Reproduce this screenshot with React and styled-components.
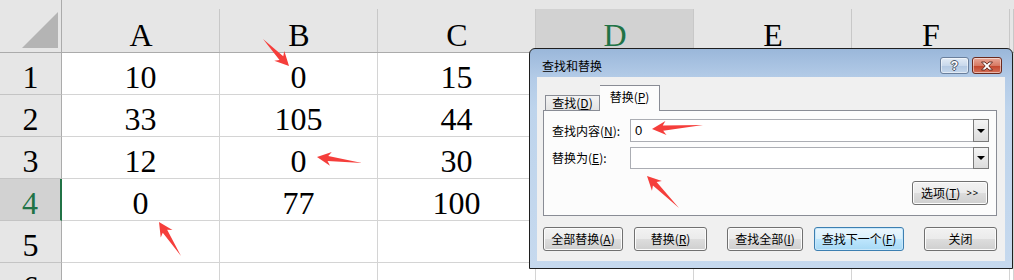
import styled, { createGlobalStyle } from "styled-components";

const GlobalStyle = createGlobalStyle`
  html, body { margin: 0; padding: 0; background: #fff; overflow: hidden; }
  * { box-sizing: border-box; }
`;

const cols = ["A", "B", "C", "D", "E", "F"];
const rows = [
  ["10", "0", "15"],
  ["33", "105", "44"],
  ["12", "0", "30"],
  ["0", "77", "100"],
  [],
  [],
];
const activeCol = 3;
const activeRow = 3;

const arrows = [
  { from: [263, 39], to: [289, 66] },
  { from: [362, 163], to: [317, 157] },
  { from: [181, 256], to: [159, 222] },
  { from: [703, 125], to: [652, 129] },
  { from: [679, 208], to: [647, 176] },
];

export default function App() {
  return (
    <Stage>
      <GlobalStyle />
      <Sheet>
        <Corner>
          <svg width="37" height="37" viewBox="0 0 37 37">
            <polygon points="36,0 36,36 0,36" fill="#b4b4b4" />
          </svg>
        </Corner>
        {cols.map((c, i) => (
          <ColHead key={c} $active={i === activeCol}>{c}</ColHead>
        ))}
        <ColHead />
        {rows.map((r, ri) => (
          <Row key={ri} r={r} ri={ri} />
        ))}
      </Sheet>

      <Dialog>
        <TitleBar>
          <Title>查找和替换</Title>
          <TitleButtons>
            <HelpButton>?</HelpButton>
            <CloseButton>
              <svg width="14" height="10" viewBox="0 0 14 10">
                <path
                  d="M1.5 1 H5 L7 3.2 L9 1 H12.5 L8.8 5 L12.5 9 H9 L7 6.8 L5 9 H1.5 L5.2 5 Z"
                  fill="#fff"
                  stroke="#5a2318"
                  strokeWidth="0.9"
                  strokeLinejoin="round"
                />
              </svg>
            </CloseButton>
          </TitleButtons>
        </TitleBar>

        <Body>
          <Tabs>
            <Tab>查找(<u>D</u>)</Tab>
            <Tab $active>替换(<u>P</u>)</Tab>
          </Tabs>
          <Panel>
            <Form>
              <Label>查找内容(<u>N</u>):</Label>
              <Combo>
                <ComboText>0</ComboText>
                <DropButton><Caret /></DropButton>
              </Combo>
              <Label>替换为(<u>E</u>):</Label>
              <Combo>
                <ComboText />
                <DropButton><Caret /></DropButton>
              </Combo>
            </Form>
            <OptionsRow>
              <Button $w={76}>选项(<u>T</u>) <Small>&gt;&gt;</Small></Button>
            </OptionsRow>
          </Panel>
          <Buttons>
            <Button $w={80}>全部替换(<u>A</u>)</Button>
            <Button $w={73} $gap={11}>替换(<u>R</u>)</Button>
            <Button $w={76} $gap={20}>查找全部(<u>I</u>)</Button>
            <Button $w={90} $gap={11} $focus>查找下一个(<u>F</u>)</Button>
            <Button $w={73} $gap={20}>关闭</Button>
          </Buttons>
        </Body>
      </Dialog>

      <Overlay width="1014" height="280" viewBox="0 0 1014 280">
        {arrows.map((a, i) => {
          const dx = a.to[0] - a.from[0];
          const dy = a.to[1] - a.from[1];
          const L = Math.hypot(dx, dy);
          const ang = (Math.atan2(dy, dx) * 180) / Math.PI;
          const pts = [
            [0, 0],
            [L - 11, -2.6],
            [L - 14, -7],
            [L, 0],
            [L - 14, 7],
            [L - 11, 2.6],
          ]
            .map((p) => p.join(","))
            .join(" ");
          return (
            <polygon
              key={i}
              points={pts}
              fill="#f53e3b"
              transform={`translate(${a.from[0]} ${a.from[1]}) rotate(${ang})`}
            />
          );
        })}
      </Overlay>
    </Stage>
  );
}

function Row({ r, ri }) {
  const active = ri === activeRow;
  return (
    <>
      <RowHead $active={active}>{ri + 1}</RowHead>
      {cols.map((c, ci) => (
        <Cell key={c}>{r[ci] || ""}</Cell>
      ))}
      <Cell />
    </>
  );
}

const Stage = styled.div`
  position: relative;
  width: 1014px;
  height: 280px;
  overflow: hidden;
  background: #fff;
`;

const Sheet = styled.div`
  display: grid;
  grid-template-columns: 62px repeat(6, 158px) 1fr;
  grid-template-rows: 53px repeat(6, 42px);
  font-family: "Liberation Serif", "Times New Roman", serif;
  font-size: 32px;
  color: #000;
`;

const Corner = styled.div`
  background: #e6e6e6;
  border-right: 1px solid #ababab;
  border-bottom: 1px solid #ababab;
  display: flex;
  align-items: flex-end;
  justify-content: flex-end;
  padding: 0 2px 3px 0;
`;

const ColHead = styled.div`
  display: flex;
  align-items: center;
  justify-content: center;
  padding-top: 17px;
  line-height: 1;
  background: linear-gradient(#c8c8c8, #c8c8c8) right 9px / 1px calc(100% - 9px) no-repeat,
    ${(p) => (p.$active ? "linear-gradient(#d2d2d2, #d2d2d2) 0 9px / 100% 100% no-repeat," : "")}
    #e6e6e6;
  color: ${(p) => (p.$active ? "#217346" : "#000")};
  border-bottom: 1px solid #ababab;
`;

const RowHead = styled.div`
  display: flex;
  align-items: center;
  justify-content: center;
  padding-top: 6px;
  line-height: 1;
  background: ${(p) => (p.$active ? "#d2d2d2" : "#e6e6e6")};
  color: ${(p) => (p.$active ? "#217346" : "#000")};
  border-bottom: 1px solid #c4c4c4;
  border-right: ${(p) => (p.$active ? "2px solid #217346" : "1px solid #ababab")};
`;

const Cell = styled.div`
  display: flex;
  align-items: center;
  justify-content: center;
  padding-top: 6px;
  line-height: 1;
  border-right: 1px solid #d4d4d4;
  border-bottom: 1px solid #d4d4d4;
`;

const Dialog = styled.div`
  position: absolute;
  left: 529px;
  top: 48px;
  width: 484px;
  height: 221px;
  border: 1px solid #1f1f1f;
  border-radius: 6px 6px 0 0;
  padding: 0 7px 7px 7px;
  display: flex;
  flex-direction: column;
  background: linear-gradient(180deg, #9ab7da 0px, #b3cbe7 28px, #bed4ec 60px, #c6d9ee 100%);
  font-family: "Noto Sans CJK SC", "Noto Sans", sans-serif;
  font-size: 12px;
  color: #000;
  u { text-decoration: underline; text-underline-offset: 1px; }
`;

const TitleBar = styled.div`
  height: 28px;
  display: flex;
  align-items: flex-start;
  justify-content: space-between;
  padding: 8px 3px 0 5px;
`;

const Title = styled.div`
  font-size: 12px;
  line-height: 18px;
`;

const TitleButtons = styled.div`
  display: flex;
  gap: 3px;
`;

const TitleBtnBase = styled.div`
  height: 17px;
  border-radius: 3px;
  display: flex;
  align-items: center;
  justify-content: center;
  box-shadow: inset 0 0 0 1px rgba(255, 255, 255, 0.5);
`;

const HelpButton = styled(TitleBtnBase)`
  width: 29px;
  border: 1px solid #6a7f9c;
  background: linear-gradient(180deg, #e3ecf6 0%, #c9d9ec 50%, #b2c8e2 51%, #c5d7ec 100%);
  font-family: "Liberation Sans", Arial, sans-serif;
  font-weight: bold;
  font-size: 12px;
  color: #fff;
  text-shadow: 1px 0 #4a5566, -1px 0 #4a5566, 0 1px #4a5566, 0 -1px #4a5566;
`;

const CloseButton = styled(TitleBtnBase)`
  width: 30px;
  border: 1px solid #6b2a1e;
  background: linear-gradient(180deg, #e9a99a 0%, #d77a64 50%, #c2432a 51%, #d4715a 100%);
`;

const Body = styled.div`
  flex: 1;
  background: #f0f0f0;
  padding: 8px 8px 9px 6px;
  display: flex;
  flex-direction: column;
`;

const Tabs = styled.div`
  height: 25px;
  display: flex;
  align-items: flex-end;
  padding-left: 2px;
`;

const Tab = styled.div`
  position: relative;
  z-index: 1;
  width: ${(p) => (p.$active ? "60px" : "55px")};
  height: ${(p) => (p.$active ? "26px" : "15px")};
  margin-bottom: ${(p) => (p.$active ? "-1px" : "0")};
  border: 1px solid #898c95;
  border-bottom: none;
  border-left: ${(p) => (p.$active ? "none" : "1px solid #898c95")};
  background: ${(p) => (p.$active ? "#fcfcfc" : "linear-gradient(180deg, #f3f3f3, #e3e3e3)")};
  display: flex;
  align-items: ${(p) => (p.$active ? "flex-start" : "center")};
  justify-content: center;
  padding-top: ${(p) => (p.$active ? "3px" : "0")};
  line-height: 16px;
`;

const Panel = styled.div`
  height: 106px;
  border: 1px solid #898c95;
  background: #fcfcfc;
  padding: 8px 7px 0 8px;
`;

const Form = styled.div`
  display: grid;
  grid-template-columns: 78px 359px;
  grid-template-rows: 23px 22px;
  row-gap: 5px;
  align-items: center;
`;

const Label = styled.div`
  line-height: 16px;
`;

const Combo = styled.div`
  height: 100%;
  display: flex;
  border: 1px solid #abadb3;
  background: #fff;
`;

const ComboText = styled.div`
  flex: 1;
  padding-left: 4px;
  display: flex;
  align-items: center;
  font-family: "Liberation Sans", Arial, sans-serif;
  font-size: 13px;
`;

const DropButton = styled.div`
  width: 16px;
  border: 1px solid #7a7a7a;
  margin: -1px -1px -1px 0;
  background: linear-gradient(180deg, #f4f4f4, #dcdcdc);
  display: flex;
  align-items: center;
  justify-content: center;
`;

const Caret = styled.span`
  width: 0;
  height: 0;
  border-left: 4px solid transparent;
  border-right: 4px solid transparent;
  border-top: 4px solid #000;
`;

const OptionsRow = styled.div`
  display: flex;
  justify-content: flex-end;
  width: 436px;
  margin-top: 12px;
`;

const Button = styled.div`
  width: ${(p) => p.$w}px;
  height: 24px;
  margin-left: ${(p) => p.$gap || 0}px;
  border: 1px solid ${(p) => (p.$focus ? "#3c7fb1" : "#707070")};
  border-radius: 3px;
  background: ${(p) =>
    p.$focus
      ? "linear-gradient(180deg, #eaf6fd 0%, #d9f0fc 50%, #bee6fd 51%, #a7d9f5 100%)"
      : "linear-gradient(180deg, #f2f2f2 0%, #ebebeb 50%, #dddddd 51%, #cfcfcf 100%)"};
  box-shadow: inset 0 0 0 1px ${(p) => (p.$focus ? "#c8e7fa" : "#fcfcfc")};
  display: flex;
  align-items: center;
  justify-content: center;
  line-height: 16px;
  white-space: nowrap;
`;

const Small = styled.span`
  font-family: "Liberation Sans", Arial, sans-serif;
  font-size: 9px;
  margin-left: 6px;
  letter-spacing: 1px;
`;

const Buttons = styled.div`
  display: flex;
  margin-top: 11px;
`;

const Overlay = styled.svg`
  position: absolute;
  left: 0;
  top: 0;
  pointer-events: none;
`;
